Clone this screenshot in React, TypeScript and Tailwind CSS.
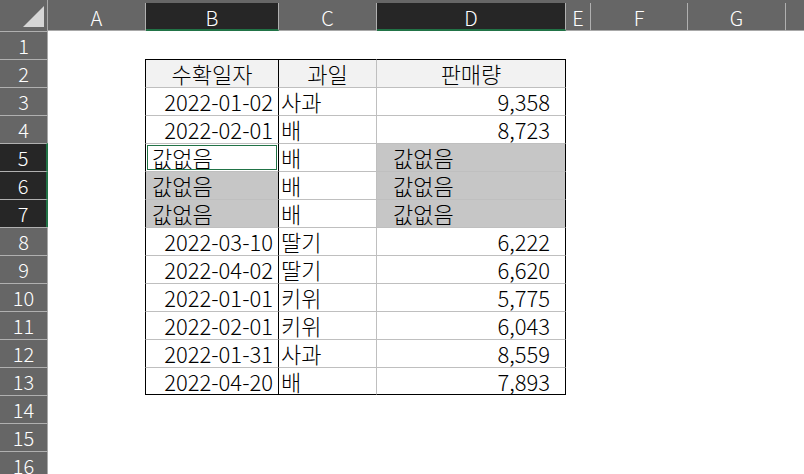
import React from "react";

const FONT = { fontFamily: '"Noto Sans CJK KR", "Noto Sans", sans-serif' };

const COLS = [
  { label: "A", w: "w-[98px]", sel: false },
  { label: "B", w: "w-[133px]", sel: true },
  { label: "C", w: "w-[98px]", sel: false },
  { label: "D", w: "w-[189px]", sel: true },
  { label: "E", w: "w-[25px]", sel: false },
  { label: "F", w: "w-[97px]", sel: false },
  { label: "G", w: "w-[98px]", sel: false },
];

type Row = { date: string; fruit: string; qty: string };

const DATA: Record<number, Row> = {
  3: { date: "2022-01-02", fruit: "사과", qty: "9,358" },
  4: { date: "2022-02-01", fruit: "배", qty: "8,723" },
  5: { date: "", fruit: "배", qty: "" },
  6: { date: "", fruit: "배", qty: "" },
  7: { date: "", fruit: "배", qty: "" },
  8: { date: "2022-03-10", fruit: "딸기", qty: "6,222" },
  9: { date: "2022-04-02", fruit: "딸기", qty: "6,620" },
  10: { date: "2022-01-01", fruit: "키위", qty: "5,775" },
  11: { date: "2022-02-01", fruit: "키위", qty: "6,043" },
  12: { date: "2022-01-31", fruit: "사과", qty: "8,559" },
  13: { date: "2022-04-20", fruit: "배", qty: "7,893" },
};

const EMPTY = "값없음";

function ColumnHeader() {
  return (
    <div className="flex h-[31px] bg-[#666666] shrink-0">
      <div className="w-[48px] h-[31px] shrink-0 border-r border-[#a8a8a8]">
        <svg width="47" height="31">
          <polygon points="44,6 44,27 23,27" fill="#d6d6d6" />
        </svg>
      </div>
      {COLS.map((c) => (
        <div
          key={c.label}
          className={`${c.w} shrink-0 h-[28px] mt-[3px] border-r border-[#b0b0b0] text-center text-[20px] leading-[27px] pt-[1px] font-light text-white ${
            c.sel ? "bg-[#262626] border-b-2 border-b-[#217346]" : "border-b border-b-[#a8a8a8]"
          }`}
        >
          {c.label}
        </div>
      ))}
      <div className="flex-1 h-[28px] mt-[3px] border-b border-b-[#a8a8a8]" />
    </div>
  );
}

function RowHeader({ n }: { n: number }) {
  const sel = n >= 5 && n <= 7;
  return (
    <div
      className={`w-[48px] h-[28px] shrink-0 border-t border-t-[#b0b0b0] text-center text-[20px] leading-[27px] font-light text-white ${
        sel ? "bg-[#262626] border-r-2 border-r-[#217346]" : "bg-[#666666] border-r border-r-[#a8a8a8]"
      }`}
    >
      {n}
    </div>
  );
}

function TableRow({ n }: { n: number }) {
  const isHead = n === 2;
  const last = n === 13;
  const top = isHead ? "border-t-black" : "border-t-[#bfbfbf]";
  const bottom = last ? "border-b border-b-black" : "";
  const base = `h-[28px] shrink-0 border-t ${top} ${bottom} text-[22px] leading-[27px] font-light text-black whitespace-nowrap`;

  if (isHead) {
    return (
      <>
        <div className={`${base} w-[133px] border-l border-l-black bg-[#f2f2f2] text-center`}>수확일자</div>
        <div className={`${base} w-[98px] border-l border-l-black bg-[#f2f2f2] text-center`}>과일</div>
        <div className={`${base} w-[190px] border-l border-l-[#bfbfbf] border-r border-r-black bg-[#f2f2f2] text-center`}>
          판매량
        </div>
      </>
    );
  }

  const r = DATA[n];
  const blank = n >= 5 && n <= 7;
  const active = n === 5;

  return (
    <>
      <div
        className={`${base} w-[133px] border-l border-l-black ${
          blank ? (active ? "relative bg-white pl-[6px]" : "bg-[#c6c6c6] pl-[6px]") : "text-right pr-[5px]"
        }`}
      >
        {blank ? EMPTY : r.date}
        {active && <span className="absolute left-[1px] top-[1px] right-[1px] bottom-[1px] border border-[#217346]" />}
      </div>
      <div className={`${base} w-[98px] border-l border-l-black pl-[2px]`}>{r.fruit}</div>
      <div
        className={`${base} w-[190px] border-l border-l-[#bfbfbf] border-r border-r-black ${
          blank ? "bg-[#c6c6c6] pl-[16px]" : "text-right pr-[15px]"
        }`}
      >
        {blank ? EMPTY : r.qty}
      </div>
    </>
  );
}

export default function App() {
  const rows = Array.from({ length: 16 }, (_, i) => i + 1);
  return (
    <div className="w-[804px] h-[474px] overflow-hidden bg-white flex flex-col" style={FONT}>
      <ColumnHeader />
      {rows.map((n) => (
        <div key={n} className="flex shrink-0">
          <RowHeader n={n} />
          <div className="w-[97px] shrink-0" />
          {n >= 2 && n <= 13 && <TableRow n={n} />}
          <div className="flex-1" />
        </div>
      ))}
    </div>
  );
}
